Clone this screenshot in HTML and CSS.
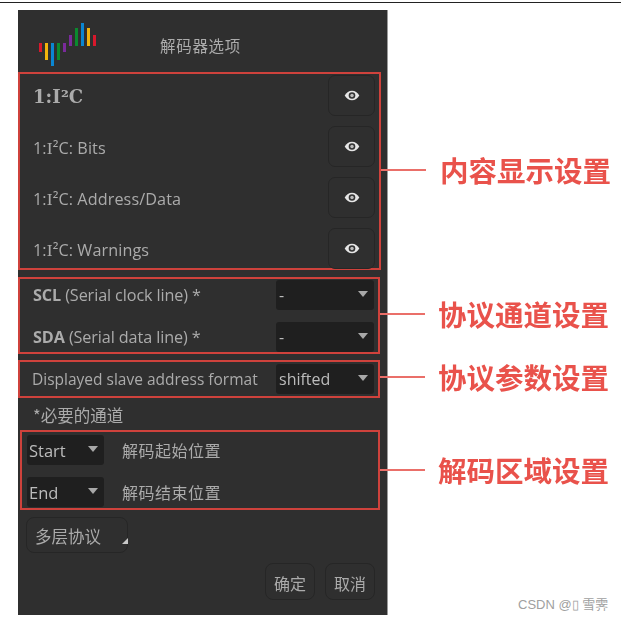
FILE: index.html
```html
<!DOCTYPE html>
<html lang="zh">
<head>
<meta charset="utf-8">
<title>解码器选项</title>
<link rel="stylesheet" href="styles.css">
</head>
<body>
<div class="topline"></div>
<div class="dialog">
  <div class="head">
    <svg class="logo" width="58" height="44" viewBox="0 0 58 44">
      <rect x="0" y="20" width="3" height="9" fill="#d8182c"/>
      <rect x="6" y="20" width="3" height="17" fill="#f2b40c"/>
      <rect x="12" y="20" width="3" height="23" fill="#0a86d2"/>
      <rect x="18" y="20" width="3" height="17" fill="#0b8a2e"/>
      <rect x="24" y="20" width="3" height="9" fill="#7a2a9c"/>
      <rect x="30" y="12" width="3" height="11" fill="#7a2a9c"/>
      <rect x="36" y="5" width="3" height="18" fill="#0b8a2e"/>
      <rect x="42" y="0" width="3" height="23" fill="#0a86d2"/>
      <rect x="48" y="5" width="3" height="18" fill="#f2b40c"/>
      <rect x="54" y="12" width="3" height="11" fill="#d8182c"/>
    </svg>
    <span class="title">解码器选项</span>
  </div>

  <section class="box box-rows">
    <div class="row"><strong class="row-main">1:I²C</strong><button class="eye"><svg width="16" height="11" viewBox="0 0 17 12"><path d="M.5 6C2.5 2.5 5.2.8 8.5.8S14.500 2.500 16.500 6C14.500 9.500 11.800 11.200 8.500 11.200S2.500 9.500.5 6Z" fill="#e6e6e6"/><circle cx="8.500" cy="6" r="3.600" fill="#333"/><circle cx="8.500" cy="6" r="1.900" fill="#bdbdbd"/></svg></button></div>
    <div class="row"><span>1:<span class="serif">I</span>²C: Bits</span><button class="eye"><svg width="16" height="11" viewBox="0 0 17 12"><path d="M.5 6C2.5 2.5 5.2.8 8.5.8S14.500 2.500 16.500 6C14.500 9.500 11.800 11.200 8.500 11.200S2.500 9.500.5 6Z" fill="#e6e6e6"/><circle cx="8.500" cy="6" r="3.600" fill="#333"/><circle cx="8.500" cy="6" r="1.900" fill="#bdbdbd"/></svg></button></div>
    <div class="row"><span>1:<span class="serif">I</span>²C: Address/Data</span><button class="eye"><svg width="16" height="11" viewBox="0 0 17 12"><path d="M.5 6C2.5 2.5 5.2.8 8.5.8S14.500 2.500 16.500 6C14.500 9.500 11.800 11.200 8.500 11.200S2.500 9.500.5 6Z" fill="#e6e6e6"/><circle cx="8.500" cy="6" r="3.600" fill="#333"/><circle cx="8.500" cy="6" r="1.900" fill="#bdbdbd"/></svg></button></div>
    <div class="row"><span>1:<span class="serif">I</span>²C: Warnings</span><button class="eye"><svg width="16" height="11" viewBox="0 0 17 12"><path d="M.5 6C2.5 2.5 5.2.8 8.5.8S14.500 2.500 16.500 6C14.500 9.500 11.800 11.200 8.500 11.200S2.500 9.500.5 6Z" fill="#e6e6e6"/><circle cx="8.500" cy="6" r="3.600" fill="#333"/><circle cx="8.500" cy="6" r="1.900" fill="#bdbdbd"/></svg></button></div>
  </section>

  <section class="box box-channels">
    <div class="field"><span><b>SCL</b> (Serial clock line) *</span><div class="select wide">-</div></div>
    <div class="field"><span><b>SDA</b> (Serial data line) *</span><div class="select wide">-</div></div>
  </section>

  <section class="box box-params">
    <div class="field"><span>Displayed slave address format</span><div class="select wide">shifted</div></div>
  </section>

  <p class="hint">*必要的通道</p>

  <section class="box box-range">
    <div class="range-row"><div class="select narrow">Start</div><span>解码起始位置</span></div>
    <div class="range-row"><div class="select narrow">End</div><span>解码结束位置</span></div>
  </section>

  <button class="stack">多层协议<i class="corner"></i></button>

  <div class="actions">
    <button class="action">确定</button>
    <button class="action">取消</button>
  </div>
</div>

<div class="note note-1"><i class="wire"></i><span>内容显示设置</span></div>
<div class="note note-2"><i class="wire"></i><span>协议通道设置</span></div>
<div class="note note-3"><i class="wire"></i><span>协议参数设置</span></div>
<div class="note note-4"><i class="wire"></i><span>解码区域设置</span></div>

<div class="mark">CSDN @▯ 雪霁</div>
</body>
</html>
```
FILE: styles.css
```css
* { box-sizing: border-box; }
html, body { margin: 0; height: 100%; }
body {
  position: relative;
  width: 621px;
  height: 621px;
  overflow: hidden;
  background: #fff;
  font-family: "Open Sans", "Noto Sans CJK SC", sans-serif;
}
.topline { height: 1px; margin-top: 2px; background: #222; }
.dialog {
  width: 370px;
  height: 605px;
  margin: 7px 0 0 18px;
  background: #2f2f2f;
  border-right: 1px solid #9a9a9a;
  color: #ababab;
  font-size: 15.500px;
  filter: blur(.4px);
}
.head { position: relative; height: 62px; display: flex; align-items: center; padding: 7px 0 0 142px; }
.logo { position: absolute; left: 21px; top: 13px; }
.title { font-size: 15.500px; letter-spacing: .7px; font-family: "Noto Sans CJK SC", sans-serif; }

.box { border: 2px solid #cf423c; }
.box-rows {
  width: 363px;
  height: 198px;
  padding: 1px 4px 0 13px;
  display: flex;
  flex-direction: column;
  gap: 10px;
}
.row { height: 41px; display: flex; align-items: center; justify-content: space-between; font-size: 16.200px; letter-spacing: .1px; }
.row > span { padding-top: 2px; }
.serif { font-family: "Liberation Serif", serif; font-size: 17.500px; }
.row-main { padding-top: 2px; font-family: "DejaVu Serif", serif; font-size: 18px; font-weight: 700; }
.eye {
  width: 47px;
  height: 41px;
  padding: 0 0 1px;
  background: #2f2f2f;
  border: 1px solid #262626;
  border-radius: 7px;
  display: flex;
  align-items: center;
  justify-content: center;
}

.box-channels {
  width: 362px;
  height: 77px;
  margin-top: 7px;
  padding: 0 4px 0 13px;
  display: flex;
  flex-direction: column;
  justify-content: center;
  gap: 12px;
  font-size: 16.200px;
  letter-spacing: -.1px;
}
.box-params {
  width: 362px;
  height: 38px;
  margin-top: 6px;
  padding: 0 4px 0 12px;
  display: flex;
  align-items: center;
  font-size: 15.500px;
}
.field { width: 100%; height: 30px; display: flex; align-items: center; justify-content: space-between; }
.field b { font-weight: 700; }

.select {
  position: relative;
  height: 30px;
  padding: 0 0 0 2px;
  display: flex;
  align-items: center;
  background: #1f1f1f;
  border-radius: 3px;
  color: #bcbcbc;
  font-size: 16px;
  letter-spacing: 0;
}
.select::after {
  content: "";
  position: absolute;
  right: 6px;
  top: 11px;
  border-left: 5.500px solid transparent;
  border-right: 5.500px solid transparent;
  border-top: 6px solid #a8a8a8;
}
.wide { width: 98px; padding-left: 3px; }
.narrow { width: 77px; font-size: 16.500px; }

.hint { margin: 6px 0 0 15px; height: 26px; line-height: 22px; font-size: 16.500px; font-family: "Noto Sans CJK SC", sans-serif; }

.box-range {
  width: 360px;
  height: 80px;
  margin: 0 0 0 2px;
  padding: 3px 0 0 5px;
  display: flex;
  flex-direction: column;
  gap: 12px;
}
.range-row { display: flex; align-items: center; gap: 18px; font-family: "Noto Sans CJK SC", sans-serif; font-size: 16px; letter-spacing: .5px; }
.range-row .select { font-family: "Open Sans", sans-serif; letter-spacing: 0; }

.stack {
  position: relative;
  display: block;
  width: 102px;
  height: 36px;
  margin: 7px 0 0 8px;
  padding: 2px 0 0 8px;
  text-align: left;
  background: #2f2f2f;
  border: 1px solid #262626;
  border-radius: 8px;
  color: #ababab;
  font: 16.500px "Noto Sans CJK SC", sans-serif;
}
.corner {
  position: absolute;
  right: -1px;
  bottom: 8px;
  border-bottom: 6px solid #c8c8c8;
  border-left: 6px solid transparent;
}

.actions { display: flex; justify-content: flex-end; gap: 10px; margin: 10px 12px 0 0; }
.action {
  width: 50px;
  height: 37px;
  padding: 2px 0 0;
  background: #2f2f2f;
  border: 1px solid #262626;
  border-radius: 8px;
  color: #ababab;
  font: 16px "Noto Sans CJK SC", sans-serif;
}

.note {
  position: absolute;
  height: 40px;
  display: flex;
  align-items: center;
  color: #e9524b;
  font: 700 28.500px/40px "Noto Sans CJK SC", sans-serif;
  white-space: nowrap;
  filter: blur(.3px);
}
.wire { display: block; height: 2px; background: #ea6f69; }
.note-1 { left: 381px; top: 150px; gap: 14px; }
.note-1 .wire { width: 45px; }
.note-2 { left: 380px; top: 294px; gap: 13px; }
.note-2 .wire { width: 45px; }
.note-3 { left: 380px; top: 357px; gap: 13px; }
.note-3 .wire { width: 45px; }
.note-4 { left: 380px; top: 450px; gap: 13px; }
.note-4 .wire { width: 45px; }

.mark {
  position: absolute;
  left: 518px;
  top: 596px;
  font: 13px/18px "Liberation Sans", "Noto Sans CJK SC", sans-serif;
  color: #a0a0a0;
  white-space: nowrap;
}
```
